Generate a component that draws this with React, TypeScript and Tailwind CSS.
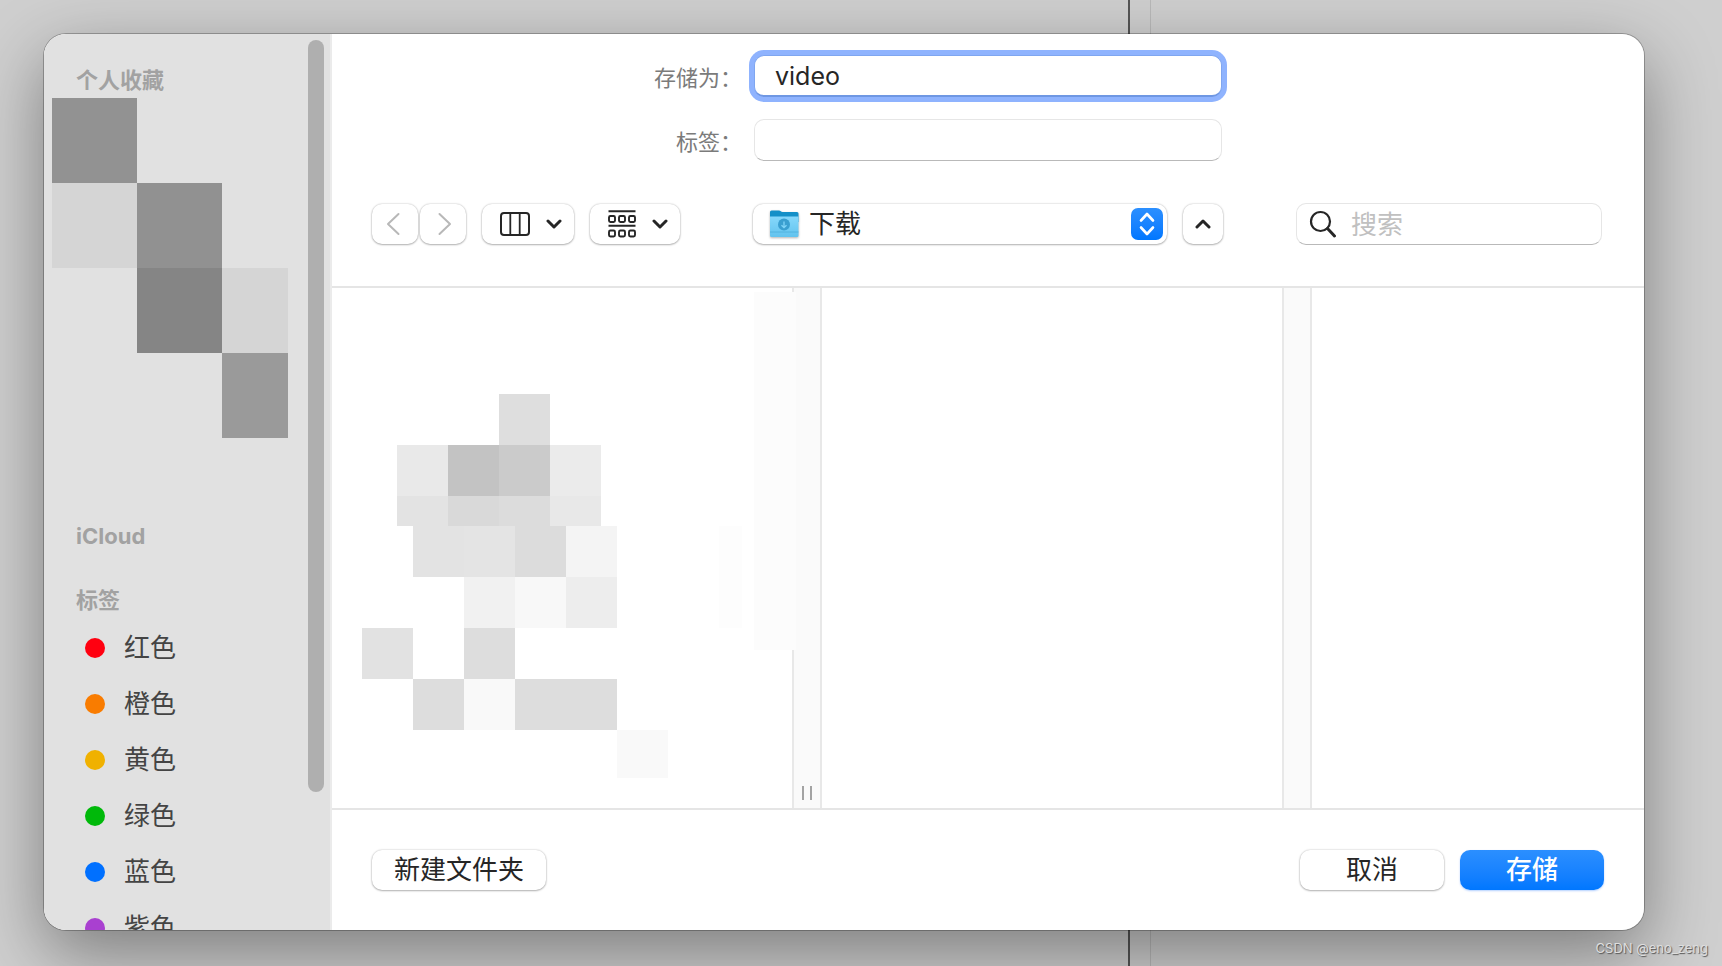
import { useState } from 'react'

type MosaicRow = { offset: string; height: string; cells: string[] }

const tags = [
    { name: '红色', color: 'bg-[#ff0010]' },
    { name: '橙色', color: 'bg-[#f97c00]' },
    { name: '黄色', color: 'bg-[#f0b100]' },
    { name: '绿色', color: 'bg-[#00b90a]' },
    { name: '蓝色', color: 'bg-[#0070ff]' },
    { name: '紫色', color: 'bg-[#a940d0]' },
]

const sidebarCells = [
    'bg-[#929292]', '', '',
    'bg-[#d5d5d5]', 'bg-[#919191]', '',
    '', 'bg-[#858585]', 'bg-[#d5d5d5]',
    '', '', 'bg-[#9a9a9a]',
]

const fileRows: MosaicRow[] = [
    { offset: 'ml-[167px]', height: 'h-[51px]', cells: ['bg-[#dedede]'] },
    {
        offset: 'ml-[65px]',
        height: 'h-[51px]',
        cells: ['bg-[#e9e9e9]', 'bg-[#c3c3c3]', 'bg-[#cbcbcb]', 'bg-[#ebebeb]'],
    },
    {
        offset: 'ml-[65px]',
        height: 'h-[30px]',
        cells: ['bg-[#e3e3e3]', 'bg-[#d9d9d9]', 'bg-[#dcdcdc]', 'bg-[#e8e8e8]'],
    },
    {
        offset: 'ml-[81px]',
        height: 'h-[51px]',
        cells: ['bg-[#e3e3e3]', 'bg-[#e4e4e4]', 'bg-[#dcdcdc]', 'bg-[#f4f4f4]'],
    },
    {
        offset: 'ml-[132px]',
        height: 'h-[51px]',
        cells: ['bg-[#f1f1f1]', 'bg-[#f8f8f8]', 'bg-[#ededed]'],
    },
    { offset: 'ml-[30px]', height: 'h-[51px]', cells: ['bg-[#e2e2e2]', '', 'bg-[#dddddd]'] },
    {
        offset: 'ml-[81px]',
        height: 'h-[51px]',
        cells: ['bg-[#dddddd]', 'bg-[#f9f9f9]', 'bg-[#dddddd]', 'bg-[#dddddd]'],
    },
    { offset: 'ml-[285px]', height: 'h-[48px]', cells: ['bg-[#f9f9f9]'] },
]

const controlClass =
    'flex h-10 items-center justify-center rounded-[10px] bg-white shadow-[0_0_2px_rgba(0,0,0,0.25),0_1px_2px_rgba(0,0,0,0.25)]'
const fieldClass =
    'rounded-[10px] border border-[#e6e6e6] border-b-[#b9b9b9] bg-white text-[26px] text-[#262626] outline-none'
const labelClass = 'pt-1 pr-3 text-right text-[22px] text-[#7b7b7b]'
const headingClass = 'pl-6 text-[22px] leading-8 font-bold text-[#a2a2a2]'

const ChevronDown = () => (
    <svg width="16" height="10" viewBox="0 0 16 10" fill="none" stroke="#262626" strokeWidth="3" strokeLinecap="round" strokeLinejoin="round">
        <path d="M2 2l6 6 6-6" />
    </svg>
)

const ColumnsIcon = () => (
    <svg width="30" height="24" viewBox="0 0 30 24" fill="none" stroke="#262626">
        <rect x="1" y="1" width="28" height="22" rx="3" strokeWidth="2" />
        <path d="M10.3 1v22M19.7 1v22" strokeWidth="1.8" />
    </svg>
)

const GroupIcon = () => (
    <svg width="28" height="28" viewBox="0 0 28 28" fill="none" stroke="#262626" strokeWidth="1.9">
        <path d="M0.5 1.3h27M0.5 15.8h27" />
        <rect x="1" y="6" width="6" height="6" rx="1.4" />
        <rect x="11" y="6" width="6" height="6" rx="1.4" />
        <rect x="21" y="6" width="6" height="6" rx="1.4" />
        <rect x="1" y="20.5" width="6" height="6" rx="1.4" />
        <rect x="11" y="20.5" width="6" height="6" rx="1.4" />
        <rect x="21" y="20.5" width="6" height="6" rx="1.4" />
    </svg>
)

const FolderIcon = () => (
    <svg width="30" height="28" viewBox="0 0 30 28" className="drop-shadow-[0_1px_1px_rgba(0,0,0,0.3)]">
        <defs>
            <linearGradient id="folder" x1="0" y1="0" x2="0" y2="1">
                <stop offset="0" stopColor="#86d8fb" />
                <stop offset="1" stopColor="#62c3ee" />
            </linearGradient>
        </defs>
        <path d="M1 2a1.5 1.5 0 0 1 1.5-1.5h7.5c1.5 0 2 1.5 3.5 1.500H28a1.5 1.5 0 0 1 1.5 1.500V12H1z" fill="#1590c8" />
        <path d="M1 6.500h28.500V25.500a1.500 1.500 0 0 1-1.500 1.500H2.500A1.500 1.500 0 0 1 1 25.500z" fill="url(#folder)" />
        <path d="M1 22h28.500" stroke="#4badda" strokeWidth="0.8" />
        <circle cx="15" cy="14.500" r="6" fill="#3a9fd0" />
        <path d="M15 11.500v6M12.500 15.200l2.500 2.500 2.500-2.500" fill="none" stroke="#7fd3f7" strokeWidth="1.300" />
    </svg>
)

const Sidebar = () => (
    <aside className="flex w-72 shrink-0 border-r-2 border-[#ebebeb] bg-[#e1e1e1]">
        <div className="min-w-0 flex-1 overflow-hidden pt-[30px] pl-2">
            <h2 className={headingClass}>个人收藏</h2>
            <div className="mt-0.5 grid grid-cols-[85px_85px_66px]">
                {sidebarCells.map((cell, index) => (
                    <div key={index} className={`h-[85px] ${cell}`} />
                ))}
            </div>
            <h2 className={`mt-[82px] ${headingClass}`}>iCloud</h2>
            <h2 className={`mt-8 ${headingClass}`}>标签</h2>
            <ul className="mt-1">
                {tags.map((tag) => (
                    <li key={tag.name} className="flex h-14 items-center gap-[19px] pl-[33px]">
                        <span className={`size-5 rounded-full ${tag.color}`} />
                        <span className="text-[26px] leading-8 text-[#444444]">{tag.name}</span>
                    </li>
                ))}
            </ul>
        </div>
        <div className="w-[22px] shrink-0 pt-1.5">
            <div className="h-[84.5%] w-4 rounded-full bg-[#afafaf]" />
        </div>
    </aside>
)

const SaveForm = () => {
    const [name, setName] = useState<string>('video')
    const [tagText, setTagText] = useState<string>('')

    return (
        <div className="grid grid-cols-[1fr_468px_1fr] items-center gap-y-[22px] pt-[21px]">
            <label htmlFor="name" className={labelClass}>
                存储为：
            </label>
            <input
                id="name"
                value={name}
                onChange={(e) => setName(e.target.value)}
                className="h-[42px] rounded-[10px] border border-[#7fa6f0] border-b-2 border-b-[#6f97e3] bg-white px-5 text-[25px] text-[#262626] shadow-[0_0_0_5px_#8fb3fe] outline-none"
            />
            <span />
            <label htmlFor="tags" className={labelClass}>
                标签：
            </label>
            <input
                id="tags"
                value={tagText}
                onChange={(e) => setTagText(e.target.value)}
                className={`h-[42px] px-5 ${fieldClass}`}
            />
        </div>
    )
}

const Toolbar = () => (
    <div className="mt-[42px] flex items-center justify-between pr-[42px] pb-[41px] pl-10">
        <div className="flex gap-4">
            <div className="flex gap-0.5">
                <button aria-label="后退" className={`w-[46px] pr-1 ${controlClass}`}>
                    <svg width="14" height="24" viewBox="0 0 14 24" fill="none" stroke="#b8b8b8" strokeWidth="2" strokeLinecap="round" strokeLinejoin="round">
                        <path d="M12.500 2L2 12l10.500 10" />
                    </svg>
                </button>
                <button aria-label="前进" className={`w-[46px] pl-1 ${controlClass}`}>
                    <svg width="14" height="24" viewBox="0 0 14 24" fill="none" stroke="#b8b8b8" strokeWidth="2" strokeLinecap="round" strokeLinejoin="round">
                        <path d="M1.500 2L12 12 1.500 22" />
                    </svg>
                </button>
            </div>
            <button aria-label="显示方式" className={`w-[92px] gap-4 pl-1.5 ${controlClass}`}>
                <ColumnsIcon />
                <ChevronDown />
            </button>
            <button aria-label="分组方式" className={`w-[90px] gap-4 pl-1.5 ${controlClass}`}>
                <GroupIcon />
                <ChevronDown />
            </button>
        </div>
        <div className="flex gap-4">
            <div className={`w-[414px] pr-1 pl-4 ${controlClass}`}>
                <FolderIcon />
                <select
                    aria-label="位置"
                    className="h-10 min-w-0 flex-1 appearance-none pb-0.5 pl-2.5 text-[26px] text-[#262626] outline-none"
                >
                    <option>下载</option>
                </select>
                <span className="flex size-8 items-center justify-center rounded-[7px] bg-linear-to-b from-[#2b8fff] to-[#0077ff]">
                    <svg width="16" height="24" viewBox="0 0 16 24" fill="none" stroke="white" strokeWidth="2.600" strokeLinecap="round" strokeLinejoin="round">
                        <path d="M2 8.500l6-6.500 6 6.500M2 15.500l6 6.500 6-6.500" />
                    </svg>
                </span>
            </div>
            <button aria-label="收起" className={`w-10 ${controlClass}`}>
                <svg width="16" height="10" viewBox="0 0 16 10" fill="none" stroke="#262626" strokeWidth="3" strokeLinecap="round" strokeLinejoin="round">
                    <path d="M2 8l6-6 6 6" />
                </svg>
            </button>
        </div>
        <div className={`flex h-[42px] w-[306px] items-center gap-3.5 px-3 ${fieldClass}`}>
            <svg width="28" height="28" viewBox="0 0 28 28" fill="none" stroke="#262626" strokeLinecap="round">
                <circle cx="11.500" cy="11.500" r="9.500" strokeWidth="2.200" />
                <path d="M18.500 18.500l7 7.500" strokeWidth="3" />
            </svg>
            <input
                type="search"
                aria-label="搜索"
                placeholder="搜索"
                className="min-w-0 flex-1 outline-none placeholder:text-[#c0c0c0]"
            />
        </div>
    </div>
)

const Browser = () => (
    <div className="flex min-h-0 flex-1 border-y-2 border-[#e5e5e5]">
        <div className="relative w-[460px] overflow-hidden pt-[106px]">
            {fileRows.map((row, index) => (
                <div key={index} className={`flex ${row.offset} ${row.height}`}>
                    {row.cells.map((cell, i) => (
                        <div key={i} className={`w-[51px] ${cell}`} />
                    ))}
                </div>
            ))}
            <div className="absolute top-[238px] right-[50px] h-[102px] w-[23px] bg-[#fdfdfd]" />
            <div className="absolute top-1 right-0 h-[358px] w-[38px] bg-[#fcfcfc]" />
        </div>
        <div className="relative flex w-[30px] items-end justify-center gap-1.5 border-x-2 border-[#e8e8e8] bg-[#fafafa] pb-2">
            <div className="absolute top-1 -left-0.5 h-[358px] w-1 bg-[#fcfcfc]" />
            <span className="h-3.5 w-0.5 bg-[#a3a3a3]" />
            <span className="h-3.5 w-0.5 bg-[#a3a3a3]" />
        </div>
        <div className="w-[460px]" />
        <div className="w-[30px] border-x-2 border-[#e8e8e8] bg-[#fafafa]" />
        <div className="flex-1" />
    </div>
)

const App = () => {
    return (
        <div className="relative flex h-screen overflow-hidden bg-[#cfcfcf] pt-[34px] pr-[78px] pb-9 pl-11 font-['Inter','Noto_Sans_CJK_SC',sans-serif]">
            <div className="absolute inset-y-0 left-[1128px] w-[23px] border-r border-l-2 border-r-[#b9b9b9] border-l-[#555555]" />
            <div className="relative flex min-w-0 flex-1 rounded-[22px] shadow-[0_0_0_1px_rgba(0,0,0,0.25),0_24px_70px_rgba(0,0,0,0.4)]">
                <div className="flex min-w-0 flex-1 overflow-hidden rounded-[22px] bg-white">
                    <Sidebar />
                    <main className="flex min-w-0 flex-1 flex-col">
                        <SaveForm />
                        <Toolbar />
                        <Browser />
                        <div className="flex items-center gap-4 p-10 text-[26px] text-[#262626]">
                            <button className={`w-[174px] pb-0.5 ${controlClass}`}>新建文件夹</button>
                            <button className={`ml-auto w-36 pb-0.5 ${controlClass}`}>取消</button>
                            <button className="flex h-10 w-36 items-center justify-center rounded-[10px] bg-linear-to-b from-[#2b8fff] to-[#0077ff] pb-0.5 font-medium text-white shadow-[0_1px_2px_rgba(0,100,255,0.3)]">
                                存储
                            </button>
                        </div>
                    </main>
                </div>
            </div>
            <span className="absolute right-3.5 bottom-2 text-[13px] text-[#dedede] [text-shadow:1px_1px_1px_#555]">
                CSDN @eno_zeng
            </span>
        </div>
    )
}

export default App
